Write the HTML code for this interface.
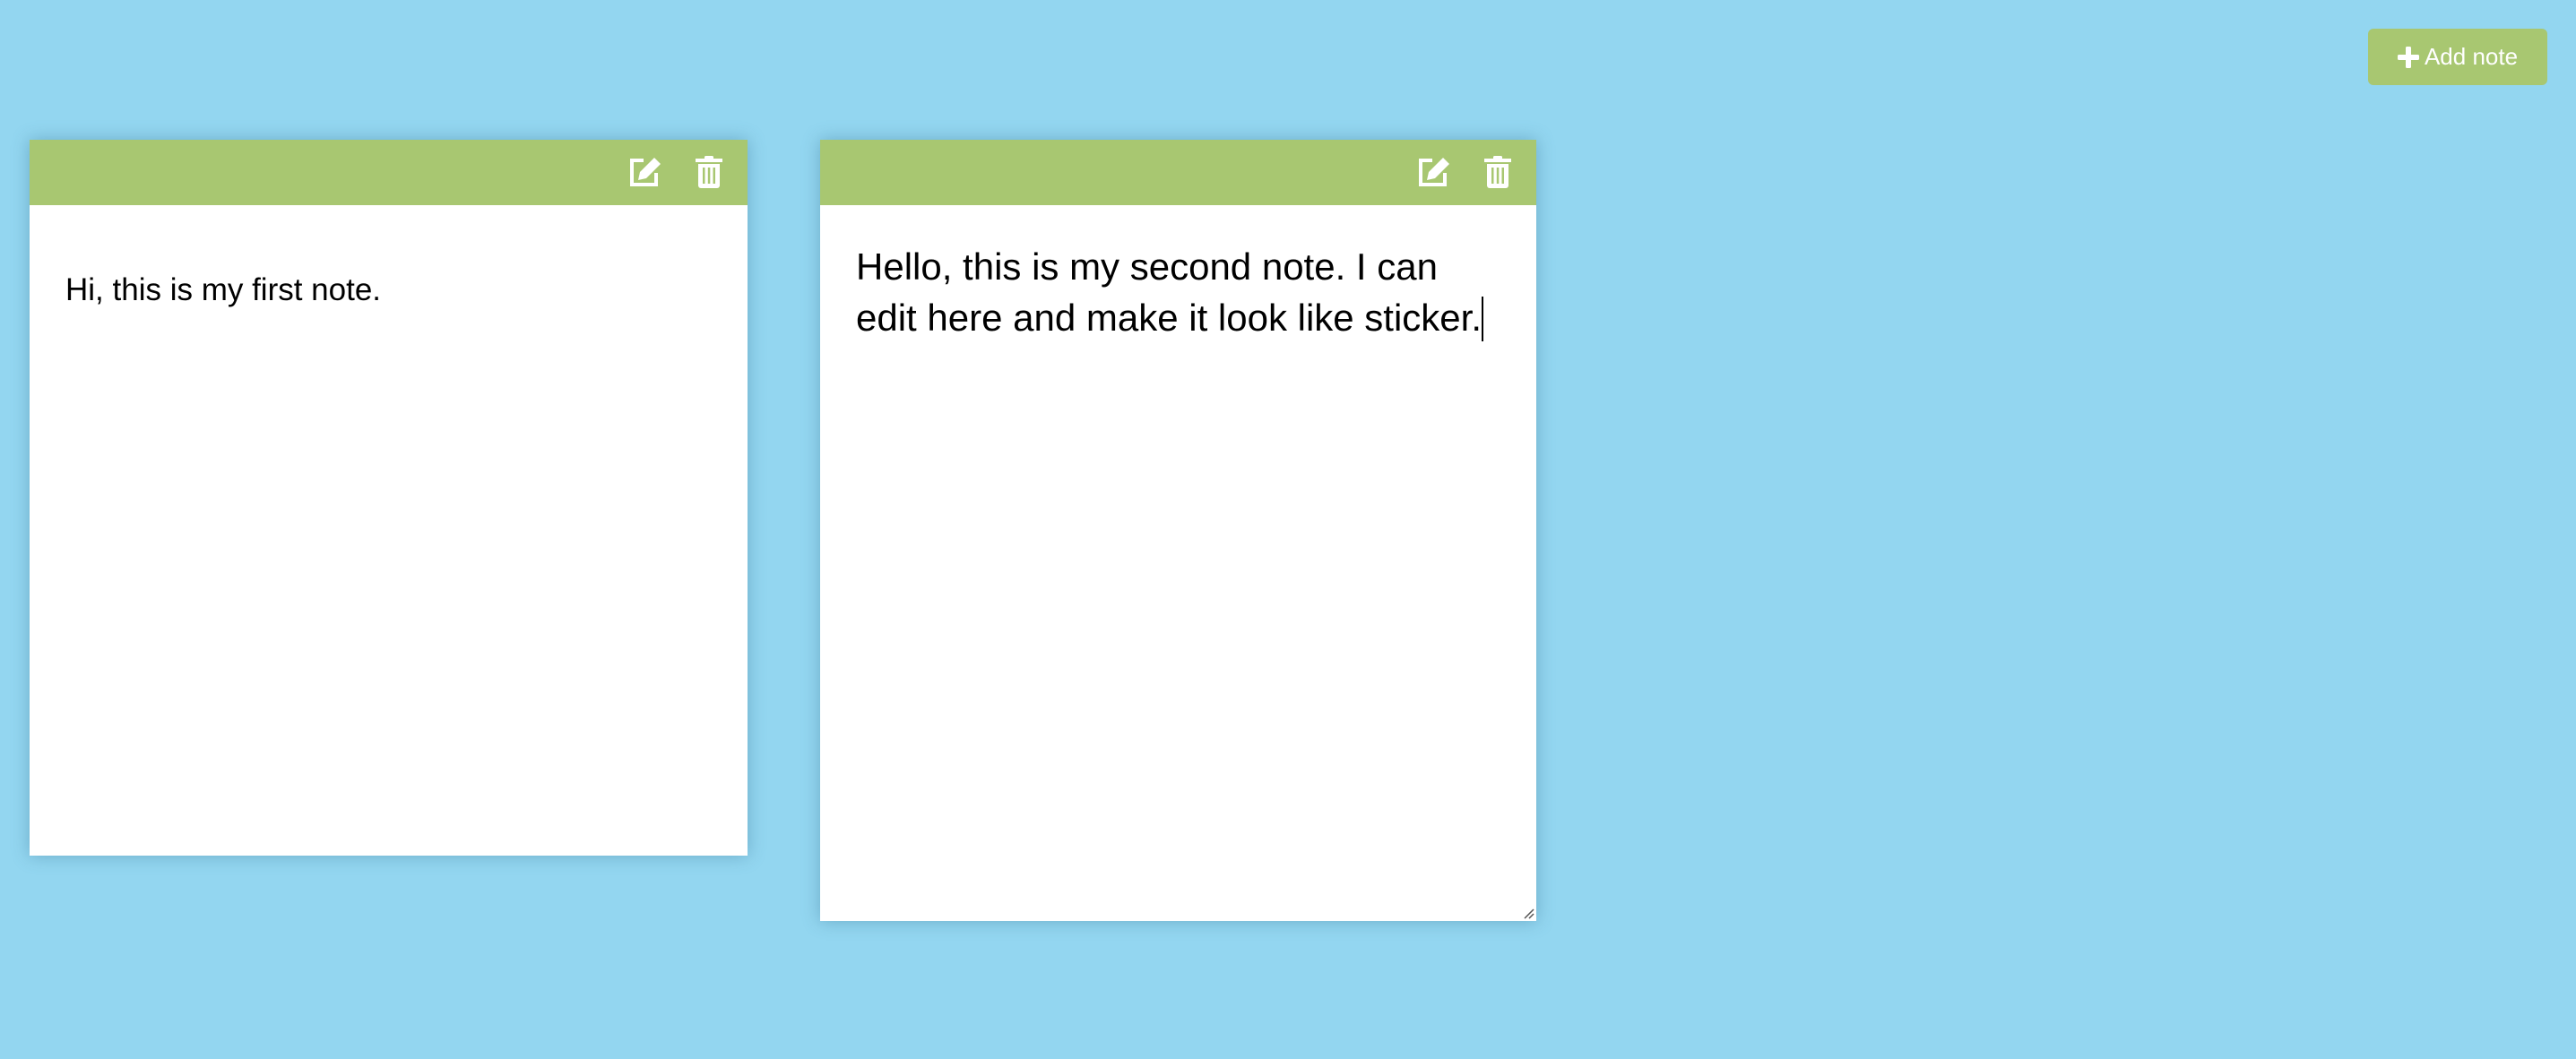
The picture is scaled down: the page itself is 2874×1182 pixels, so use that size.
<!DOCTYPE html>
<html><head><meta charset="utf-8"><style>
html,body{margin:0;padding:0;}
body{width:2874px;height:1182px;background:#93d6f0;position:relative;overflow:hidden;font-family:"Liberation Sans",Arial,sans-serif;}
.btn{position:absolute;left:2642px;top:32px;width:200px;height:63px;background:#a8c771;border-radius:6px;color:#fff;font-size:26px;display:flex;align-items:center;justify-content:center;}
.btn svg{margin-right:6px}
.note{position:absolute;background:#fff;box-shadow:0 0 18px rgba(60,120,150,0.45);}
.hdr{position:absolute;left:0;top:0;right:0;height:73px;background:#a8c771;}
.ic{position:absolute;top:18px;}
.txt{position:absolute;color:#000;white-space:nowrap;}
</style></head><body>
<div class="btn"><svg width="24" height="24" viewBox="0 0 24 24"><rect x="9" y="0" width="6" height="24" rx="1.5" fill="#fff"/><rect x="0" y="9" width="24" height="6" rx="1.5" fill="#fff"/></svg>Add note</div>

<div class="note" style="left:33px;top:156px;width:801px;height:799px;">
  <div class="hdr">
    <svg class="ic" style="left:668px" width="38" height="36" viewBox="0 0 38 36"><path d="M17 5H4v27h27V19" fill="none" stroke="#fff" stroke-width="4"/><path d="M11 27l2-9L29 2l7 7L20 25z" fill="#fff"/></svg>
    <svg class="ic" style="left:743px" width="30" height="36" viewBox="0 0 30 36"><rect x="0" y="3" width="30" height="4" fill="#fff"/><rect x="10" y="0" width="10" height="4" rx="1.5" fill="#fff"/><path d="M3 9h24v24a3 3 0 0 1-3 3H6a3 3 0 0 1-3-3z" fill="#fff"/><rect x="8" y="13" width="2.5" height="18" fill="#a8c771"/><rect x="13.8" y="13" width="2.5" height="18" fill="#a8c771"/><rect x="19.5" y="13" width="2.5" height="18" fill="#a8c771"/></svg>
  </div>
  <div class="txt" style="left:40px;top:148px;font-size:35px;">Hi, this is my first note.</div>
</div>

<div class="note" style="left:915px;top:156px;width:799px;height:872px;">
  <div class="hdr">
    <svg class="ic" style="left:666px" width="38" height="36" viewBox="0 0 38 36"><path d="M17 5H4v27h27V19" fill="none" stroke="#fff" stroke-width="4"/><path d="M11 27l2-9L29 2l7 7L20 25z" fill="#fff"/></svg>
    <svg class="ic" style="left:741px" width="30" height="36" viewBox="0 0 30 36"><rect x="0" y="3" width="30" height="4" fill="#fff"/><rect x="10" y="0" width="10" height="4" rx="1.5" fill="#fff"/><path d="M3 9h24v24a3 3 0 0 1-3 3H6a3 3 0 0 1-3-3z" fill="#fff"/><rect x="8" y="13" width="2.5" height="18" fill="#a8c771"/><rect x="13.8" y="13" width="2.5" height="18" fill="#a8c771"/><rect x="19.5" y="13" width="2.5" height="18" fill="#a8c771"/></svg>
  </div>
  <div class="txt" style="left:40px;top:113px;font-size:42px;line-height:57px;">Hello, this is my second note. I can<br>edit here and make it look like sticker.<span style="display:inline-block;width:2px;height:50px;background:#000;vertical-align:-12px;"></span></div>
  <svg style="position:absolute;right:2px;bottom:2px" width="14" height="14" viewBox="0 0 14 14"><path d="M13 3L3 13M13 8L8 13" stroke="#555" stroke-width="1.5"/></svg>
</div>
</body></html>
